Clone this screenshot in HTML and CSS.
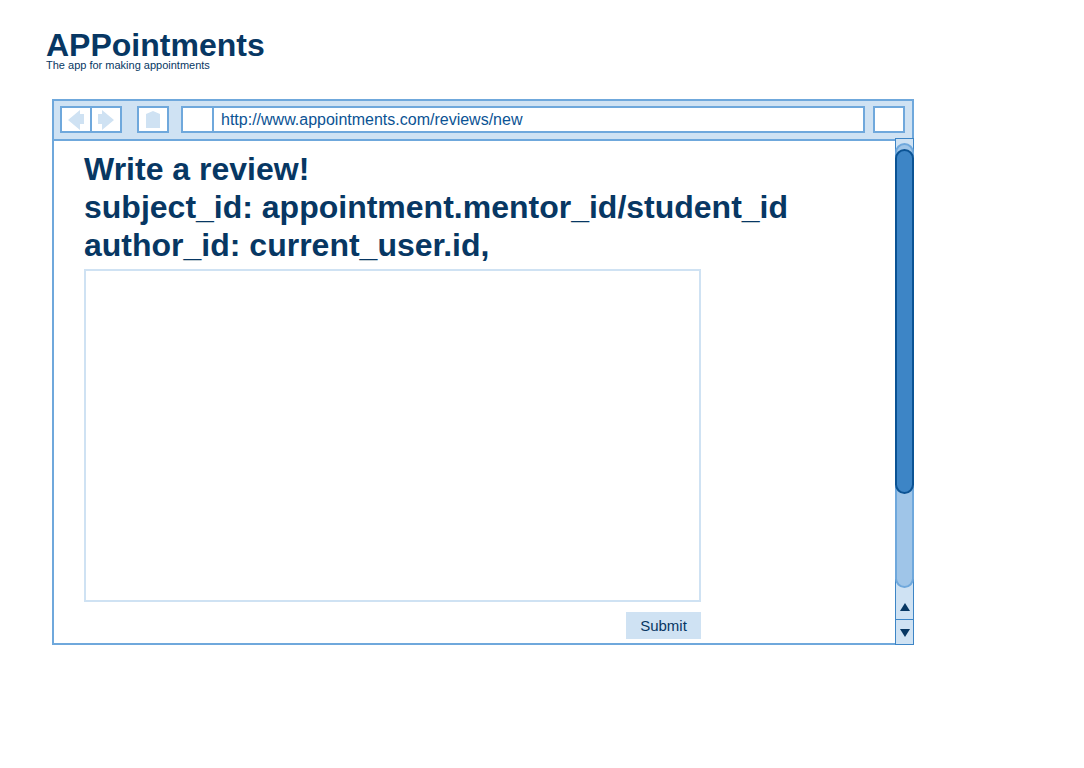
FILE: index.html
```html
<!DOCTYPE html>
<html lang="en">
<head>
<meta charset="utf-8">
<meta name="viewport" content="width=device-width, initial-scale=1">
<title>APPointments</title>
<link rel="stylesheet" href="styles.css">
</head>
<body>
<header class="brand">
  <h1 class="brand-name">APPointments</h1>
  <p class="brand-tagline">The app for making appointments</p>
</header>
<main class="browser">
  <nav class="toolbar" aria-label="Browser">
    <div class="history">
      <button class="tool" type="button" aria-label="Back"><svg width="16" height="20" viewBox="0 0 16 20"><path d="M0 10 12 0V4H16V14H12V20Z"/></svg></button>
      <button class="tool" type="button" aria-label="Forward"><svg width="16" height="20" viewBox="0 0 16 20"><path d="M16 10 4 0V4H0V14H4V20Z"/></svg></button>
    </div>
    <button class="tool" type="button" aria-label="Home"><svg width="16" height="20" viewBox="0 0 16 20"><path d="M1 4 8 1 15 4V18H1Z"/></svg></button>
    <div class="address">
      <span class="site-icon"></span>
      <input class="url" type="text" aria-label="Address" value="http://www.appointments.com/reviews/new">
    </div>
    <button class="tool" type="button" aria-label="Menu"></button>
  </nav>
  <div class="viewport">
    <form class="review">
      <label class="title" for="review-text">Write a review!<br>subject_id: appointment.mentor_id/student_id<br>author_id: current_user.id,</label>
      <textarea class="review-text" id="review-text"></textarea>
      <button class="submit" type="button">Submit</button>
    </form>
    <div class="scrollbar">
      <div class="track"><div class="thumb"></div></div>
      <button class="step step-up" type="button" aria-label="Scroll up"><svg width="10" height="8" viewBox="0 0 10 8"><path d="M5 0 10 8H0Z"/></svg></button>
      <button class="step step-down" type="button" aria-label="Scroll down"><svg width="10" height="8" viewBox="0 0 10 8"><path d="M0 0H10L5 8Z"/></svg></button>
    </div>
  </div>
</main>
</body>
</html>
```
FILE: styles.css
```css
* {
  box-sizing: border-box;
}

body {
  margin: 0;
  padding: 29px 170px 24px 46px;
  background: #fff;
  color: #073763;
  font-family: "Liberation Sans", Arial, sans-serif;
}

button,
input,
textarea {
  margin: 0;
  padding: 0;
  border-radius: 0;
  font-family: inherit;
}

svg {
  display: block;
}

.brand-name {
  margin: 0;
  font-size: 32px;
  line-height: 32px;
}

.brand-tagline {
  margin: 0 0 30px;
  font-size: 11px;
  line-height: 8px;
}

.browser {
  margin-left: 6px;
  border: 2px solid #6fa8dc;
}

.toolbar {
  display: flex;
  gap: 15px;
  padding: 5px 7px 6px 6px;
  border-bottom: 2px solid #6fa8dc;
  background: #cfe2f3;
}

.history {
  display: flex;
}

.tool {
  display: flex;
  align-items: center;
  justify-content: center;
  width: 32px;
  height: 27px;
  border: 2px solid #6fa8dc;
  background: #fff;
  fill: #cfe2f3;
}

.history .tool + .tool {
  margin-left: -2px;
}

.address {
  display: flex;
  flex: 1;
  margin: 0 -7px 0 -3px;
  height: 27px;
  border: 2px solid #6fa8dc;
  background: #fff;
}

.site-icon {
  width: 31px;
  border-right: 2px solid #6fa8dc;
}

.url {
  flex: 1;
  min-width: 0;
  padding: 1px 0 0 7px;
  border: 0;
  background: none;
  color: #0b5394;
  font-size: 16px;
}

.viewport {
  display: flex;
  justify-content: space-between;
}

.review {
  display: flex;
  flex: 0 1 735px;
  flex-direction: column;
  min-width: 0;
  padding: 9px 0 4px 30px;
}

.title {
  font-size: 32px;
  font-weight: bold;
  line-height: 38px;
  overflow-wrap: anywhere;
}

.review-text {
  width: 100%;
  max-width: 617px;
  height: 333px;
  margin-top: 5px;
  padding: 8px;
  border: 2px solid #cfe2f3;
  background: #fff;
  color: #073763;
  font-size: 15px;
  resize: none;
}

.submit {
  width: 75px;
  height: 27px;
  margin: 10px 0 0 542px;
  border: 0;
  background: #cfe2f3;
  color: #073763;
  font-size: 15px;
}

.scrollbar {
  display: flex;
  flex: 0 0 19px;
  flex-direction: column;
  position: relative;
  margin: -3px -2px -2px 0;
  border: 1px solid #3d85c6;
  background: #cfe2f3;
}

.track {
  flex: 1;
  margin: 4px -1px 0;
  padding: 4px 0 92px;
  border: 2px solid #6fa8dc;
  border-radius: 10px;
  background: #9fc5e8;
}

.thumb {
  height: 100%;
  margin: 0 -2px;
  border: 2px solid #0b5394;
  border-radius: 10px;
  background: #3d85c6;
}

.step {
  display: flex;
  align-items: center;
  justify-content: center;
  width: 100%;
  height: 25px;
  padding-top: 1px;
  border: 0;
  background: #cfe2f3;
  fill: #073763;
}

.step-up {
  height: 31px;
  padding-top: 7px;
}

.step-down {
  border-top: 1px solid #3d85c6;
}
```
